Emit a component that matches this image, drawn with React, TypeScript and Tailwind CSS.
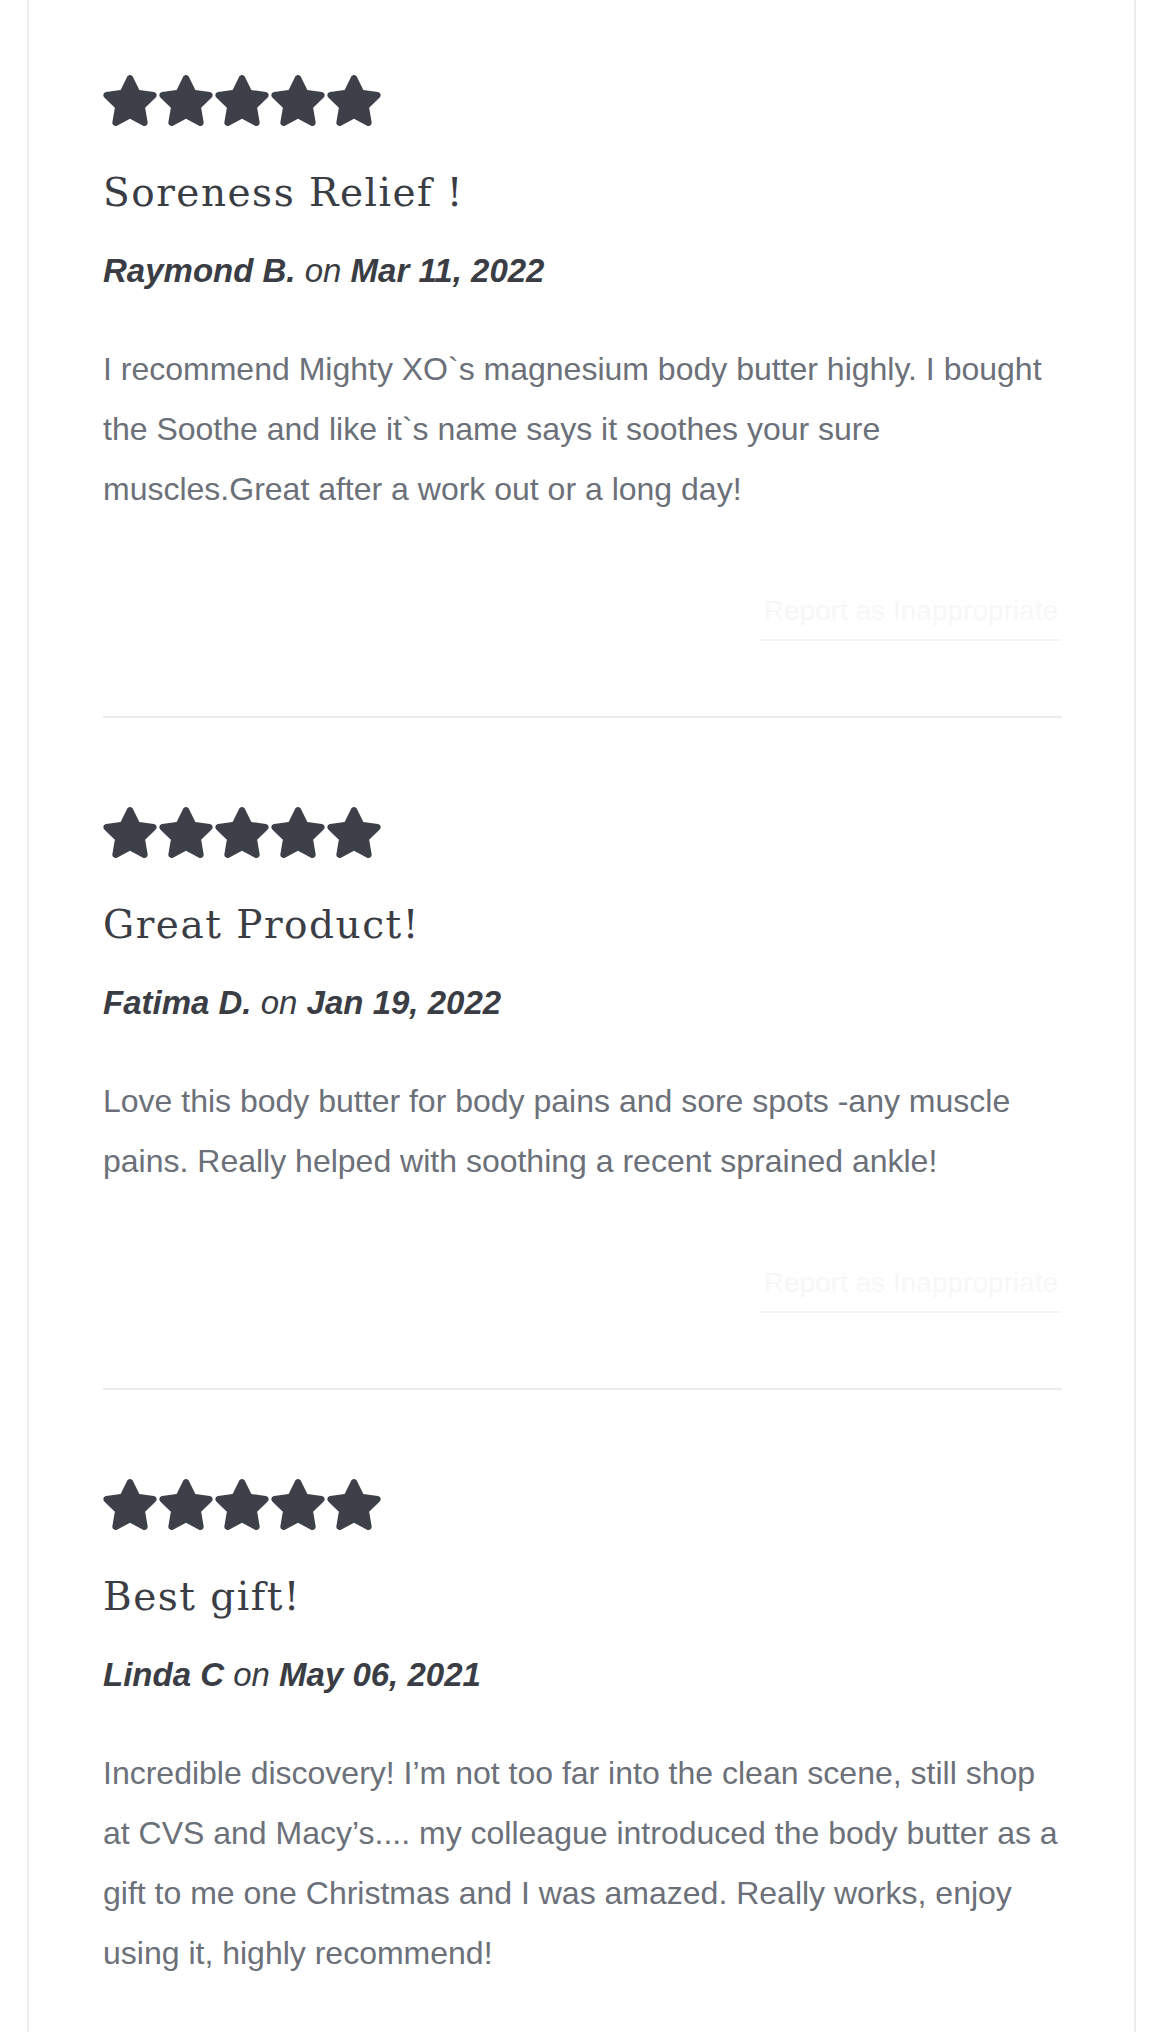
const reviews = [
  {
    title: "Soreness Relief !",
    author: "Raymond B.",
    date: "Mar 11, 2022",
    body: "I recommend Mighty XO`s magnesium body butter highly. I bought the Soothe and like it`s name says it soothes your sure muscles.Great after a work out or a long day!",
  },
  {
    title: "Great Product!",
    author: "Fatima D.",
    date: "Jan 19, 2022",
    body: "Love this body butter for body pains and sore spots -any muscle pains. Really helped with soothing a recent sprained ankle!",
  },
  {
    title: "Best gift!",
    author: "Linda C",
    date: "May 06, 2021",
    body: "Incredible discovery! I’m not too far into the clean scene, still shop at CVS and Macy’s.... my colleague introduced the body butter as a gift to me one Christmas and I was amazed. Really works, enjoy using it, highly recommend!",
  },
];

const sans = "font-['Liberation_Sans',Arial,sans-serif]";

function Star() {
  return (
    <svg viewBox="18 0 540 512" className="w-[54px] h-[51px]" fill="currentColor">
      <path d="M259.3 17.8L194 150.2 47.9 171.5c-26.2 3.8-36.7 36.1-17.7 54.6l105.7 103-25 145.5c-4.5 26.3 23.2 46 46.4 33.7L288 439.6l130.7 68.7c23.2 12.2 50.9-7.4 46.4-33.7l-25-145.5 105.7-103c19-18.5 8.5-50.8-17.7-54.6L382 150.2 316.7 17.8c-11.7-23.6-45.6-23.9-57.4 0z" />
    </svg>
  );
}

function Review({ r, last }: { r: (typeof reviews)[number]; last: boolean }) {
  return (
    <div className={last ? "" : "pb-[89px]"}>
      {/* rating */}
      <div className="flex gap-[2px] text-[#3d4048]">
        {[0, 1, 2, 3, 4].map((i) => (
          <Star key={i} />
        ))}
      </div>

      <h3 className="mt-[46px] font-['DejaVu_Serif',serif] text-[39px] leading-[42px] tracking-[1.5px] text-[#3a3d44]">
        {r.title}
      </h3>

      <p className={`mt-[35px] ${sans} italic text-[33px] leading-[43px] text-[#3a3d44]`}>
        <span className="font-bold">{r.author}</span> on <span className="font-bold">{r.date}</span>
      </p>

      <p className={`mt-[47px] ${sans} text-[32px] leading-[60px] text-[#6b7079]`}>{r.body}</p>

      {!last && (
        <>
          <div className="mt-[72px] h-[50px] flex justify-end">
            <a className={`${sans} text-[28px] leading-[40px] text-[#f7f7f7] border-b-2 border-[#f4f4f4] px-1`}>
              Report as Inappropriate
            </a>
          </div>
          <div className="mt-[75px] h-[2px] bg-[#ebebeb]" />
        </>
      )}
    </div>
  );
}

export default function App() {
  return (
    <div className="min-h-screen bg-white">
      <div className="ml-[27px] w-[1109px] min-h-[2032px] border-x-2 border-[#ebebeb] pl-[74px] pr-[72px] pt-[75px] pb-[80px]">
        {reviews.map((r, i) => (
          <Review key={r.title} r={r} last={i === reviews.length - 1} />
        ))}
      </div>
    </div>
  );
}
